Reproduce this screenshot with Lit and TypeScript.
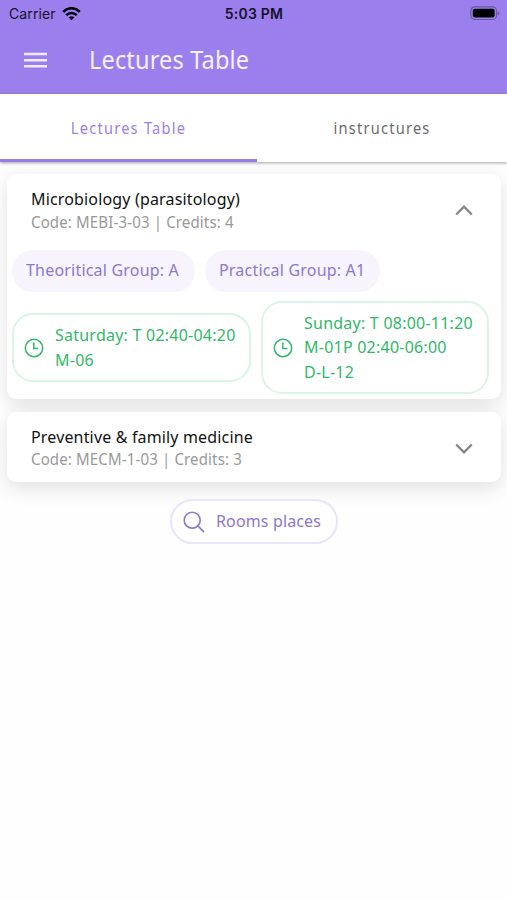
import { LitElement, html, svg, css } from "lit";
import { customElement, property } from "lit/decorators.js";

const clock = html`<svg class="clock" viewBox="0 0 20 20" width="20" height="20" fill="none" stroke="currentColor" stroke-width="1.5">
  <circle cx="10" cy="10" r="8.7" /><path d="M9.8 4.6V10.4H14.4" /></svg>`;

interface Slot { text: string[]; }
interface Lecture { title: string; code: string; credits: number; groups: string[]; slots: Slot[]; }

const lectures: Lecture[] = [
  {
    title: "Microbiology (parasitology)", code: "MEBI-3-03", credits: 4,
    groups: ["Theoritical Group: A", "Practical Group: A1"],
    slots: [
      { text: ["Saturday: T 02:40-04:20", "M-06"] },
      { text: ["Sunday: T 08:00-11:20", "M-01P 02:40-06:00", "D-L-12"] },
    ],
  },
  { title: "Preventive & family medicine", code: "MECM-1-03", credits: 3, groups: [], slots: [] },
];

// Slightly condensed setting of the humanist sans used for all app text.
const condensed = css`
  .narrow { display: block; white-space: nowrap; transform: scaleX(0.94); transform-origin: 0 50%; }
`;

@customElement("status-bar")
export class StatusBar extends LitElement {
  static styles = css`
    :host { display: grid; grid-template-columns: 1fr auto 1fr; align-items: center; height: 27px; padding: 0 7px 0 9px; box-sizing: border-box;
      font: 14px/27px Inter, "Liberation Sans", sans-serif; color: #17102b; }
    .left { display: flex; align-items: center; gap: 6px; }
    .carrier { letter-spacing: 0.1px; }
    .time { font-weight: 600; letter-spacing: 0.2px; position: relative; left: -0.5px; }
    .right { display: flex; justify-content: flex-end; }
    svg { display: block; }
  `;
  render() {
    return html`
      <div class="left"><span class="carrier">Carrier</span>
        <svg width="19" height="14" viewBox="0 0 19 14" fill="none" stroke="#07040f" stroke-width="2.6">
          <path d="M1.2 4.8C6 0 13 0 17.8 4.8" /><path d="M4.2 8.1C7.2 5.2 11.8 5.2 14.8 8.1" />
          <path d="M9.5 13.2L6.6 10.3C8.2 8.8 10.8 8.8 12.4 10.3Z" fill="#07040f" stroke="none" />
        </svg></div>
      <span class="time">5:03 PM</span>
      <div class="right">
        <svg width="30" height="15" viewBox="0 0 30 15">
          <rect x=".9" y=".9" width="25.6" height="12.6" rx="3.8" fill="none" stroke="#6a57a6" stroke-width="1.2" />
          <rect x="2.8" y="2.8" width="21.8" height="8.8" rx="2" fill="#000" />
          <path d="M27.8 5.2C29.9 5.8 29.9 8.6 27.8 9.2Z" fill="#6a57a6" />
        </svg></div>`;
  }
}

@customElement("lecture-card")
export class LectureCard extends LitElement {
  @property({ attribute: false }) lecture!: Lecture;
  @property({ type: Boolean }) open = false;
  static styles = [condensed, css`
    :host { display: block; box-sizing: border-box; background: #fff; border-radius: 9px; box-shadow: 0 6px 20px rgba(0, 0, 0, 0.12); }
    .head { display: flex; align-items: center; justify-content: space-between; box-sizing: border-box; height: 70.5px; padding: 3px 28px 0 24px; }
    .title { font-size: 17px; line-height: 23.5px; color: #111; letter-spacing: 0.18px; }
    .meta { font-size: 16px; line-height: 23.5px; color: #999; letter-spacing: 0.14px; }
    svg { display: block; flex: none; }
    .groups { display: grid; grid-template-columns: 183px 175px; gap: 10px; padding: 5.5px 5px 0; }
    .group { height: 42px; line-height: 40px; box-sizing: border-box; padding-left: 14px; border-radius: 21px; background: #f7f4fe; color: #8c76d0; font-size: 17px; letter-spacing: 0.22px; }
    .slots { display: grid; grid-template-columns: 239px 228px; align-items: center; gap: 10px; padding: 9px 5px 5px; }
    .slot { display: flex; align-items: center; gap: 11px; box-sizing: border-box; padding: 8px 0 8px 10px; border: 2px solid #d8f6e5; border-radius: 21px;
      color: #31b768; font-size: 17px; line-height: 24.4px; letter-spacing: 0.26px; }
  `];
  render() {
    const l = this.lecture;
    return html`
      <div class="head">
        <div><div class="title narrow">${l.title}</div><div class="meta narrow">Code: ${l.code} | Credits: ${l.credits}</div></div>
        <svg width="18" height="11" viewBox="0 0 18 11" fill="none" stroke="#858585" stroke-width="2.3">
          ${this.open ? svg`<path d="M1.2 9.5L9 1.7L16.8 9.5" />` : svg`<path d="M1.2 1.5L9 9.3L16.8 1.5" />`}
        </svg>
      </div>
      ${this.open ? html`
        <div class="groups">${l.groups.map((g) => html`<div class="group"><span class="narrow">${g}</span></div>`)}</div>
        <div class="slots">${l.slots.map((s) => html`<div class="slot">${clock}<div class="lines">${s.text.map((t) => html`<div class="narrow">${t}</div>`)}</div></div>`)}</div>` : ""}`;
  }
}

@customElement("app-root")
export class AppRoot extends LitElement {
  static styles = [condensed, css`
    :host { display: block; height: 900px; overflow: hidden; background: #fefefe; font-family: "Noto Sans", "Open Sans", sans-serif; }
    header { height: 94px; background: #9b80ed; }
    .bar { display: flex; align-items: center; height: 66px; padding-left: 24px; gap: 42px; }
    .bar svg { display: block; }
    h1 { margin: 0; padding-bottom: 2px; font-weight: 400; font-size: 25px; line-height: 34px; color: #f6f0ff; letter-spacing: 0.18px; }
    .tabs { display: flex; height: 68px; background: #fff; position: relative; box-shadow: 0 1px 3px rgba(0, 0, 0, 0.36); }
    .tab { flex: 0 0 257px; box-sizing: border-box; text-align: center; font-size: 15.5px; line-height: 69px; letter-spacing: 1.33px; color: #6c6c6c; border-bottom: 3px solid transparent; }
    .tab .narrow { transform-origin: 50% 50%; }
    .tab + .tab { flex: 1; }
    .active { color: #9b80ed; border-color: #957ce6; }
    main { display: flex; flex-direction: column; gap: 12.5px; padding: 12px 6px 0 7px; }
    .rooms { align-self: center; display: flex; align-items: center; gap: 11px; box-sizing: border-box; width: 168px; height: 45px; margin-top: 4.5px; padding: 0 0 0 11px;
      border: 2px solid #e9e4fc; border-radius: 22.5px; background: #fff; color: #8c76d0; font: inherit; font-size: 17px; letter-spacing: 0.16px; }
    .rooms svg { flex: none; }
    .label { padding-bottom: 2px; }
  `];
  render() {
    return html`
      <header>
        <status-bar></status-bar>
        <div class="bar">
          <svg width="23" height="17" viewBox="0 0 23 17" fill="#f1eaff"><path d="M0 .7h23v2.5H0zM0 6.9h23v2.5H0zM0 13.1h23v2.5H0z" /></svg>
          <h1 class="narrow">Lectures Table</h1>
        </div>
      </header>
      <nav class="tabs">
        <div class="tab active"><span class="narrow">Lectures Table</span></div>
        <div class="tab"><span class="narrow">instructures</span></div>
      </nav>
      <main>
        ${lectures.map((l, i) => html`<lecture-card .lecture=${l} ?open=${i === 0}></lecture-card>`)}
        <button class="rooms">
          <svg width="22" height="22" viewBox="0 0 22 22" fill="none" stroke="currentColor" stroke-width="1.6" stroke-linecap="round"><circle cx="9.2" cy="9.2" r="8" /><path d="M15 15L20.6 20.6" /></svg>
          <span class="label narrow">Rooms places</span>
        </button>
      </main>`;
  }
}
